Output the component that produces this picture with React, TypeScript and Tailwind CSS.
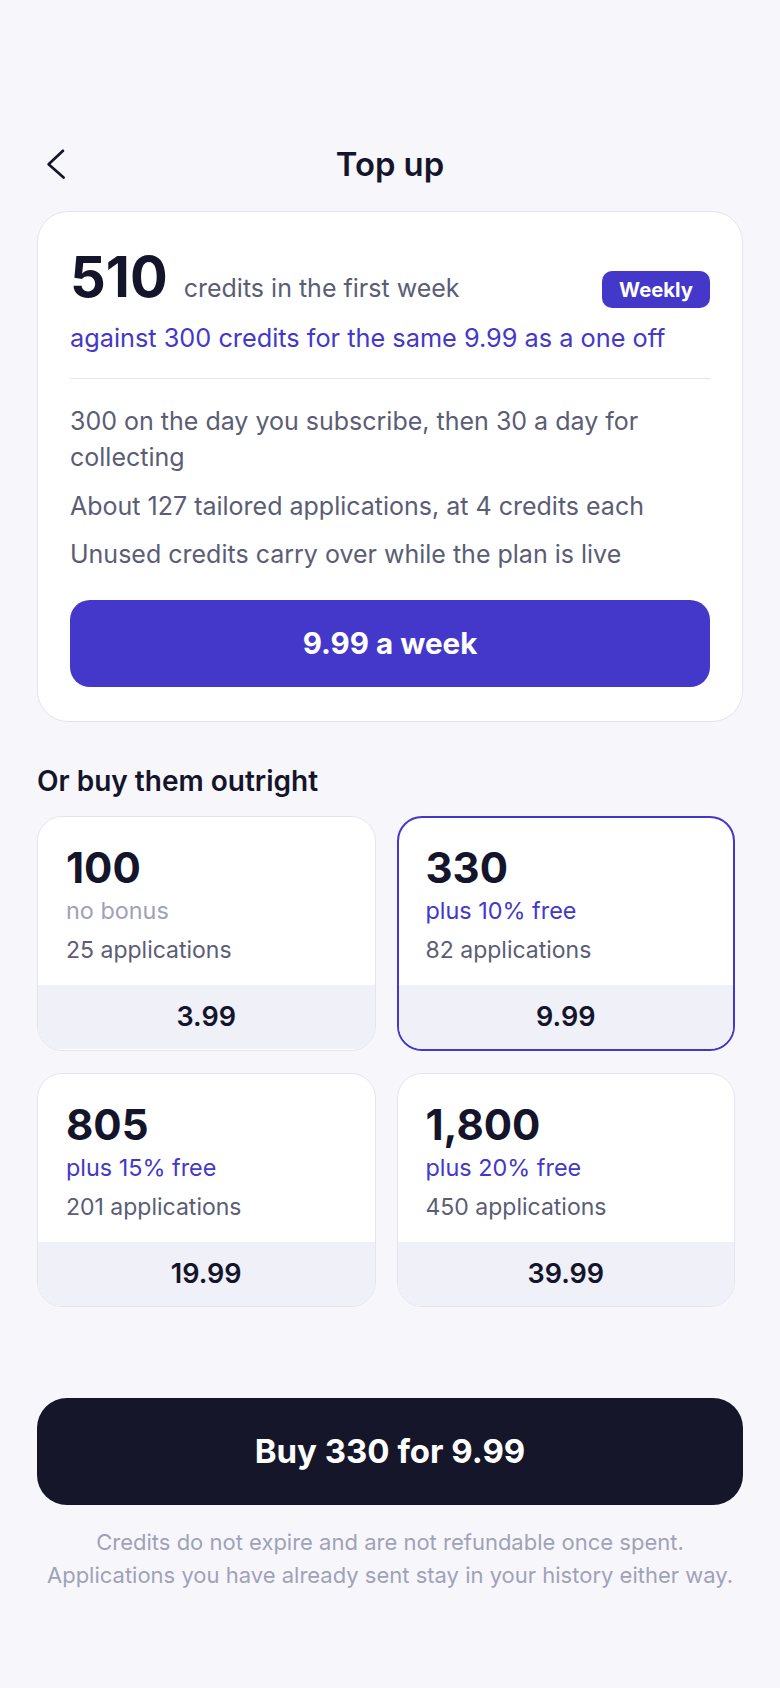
import React from "react";

// ─── Packs shown in the grid ────────────────────────────────────────────────
type Pack = { id: string; credits: string; bonus: string; apps: string; price: string };

const PACKS: Pack[] = [
  { id: "p100",  credits: "100",   bonus: "no bonus",      apps: "25 applications",  price: "3.99" },
  { id: "p330",  credits: "330",   bonus: "plus 10% free", apps: "82 applications",  price: "9.99" },
  { id: "p805",  credits: "805",   bonus: "plus 15% free", apps: "201 applications", price: "19.99" },
  { id: "p1800", credits: "1,800", bonus: "plus 20% free", apps: "450 applications", price: "39.99" },
];

const SELECTED = "p330";

function PackCard({ pack }: { pack: Pack }) {
  const selected = pack.id === SELECTED;
  const hasBonus = pack.bonus !== "no bonus";
  return (
    <button
      className={`flex flex-col overflow-hidden rounded-[25px] bg-white text-left ${
        selected ? "border-2 border-[#4338ca]" : "border border-[#e4e4ee]"
      }`}
    >
      <div className={`flex flex-col pb-[19px] ${selected ? "px-[27px] pt-[26px]" : "px-[28px] pt-[27px]"}`}>
        <span className="text-[42px] font-bold leading-[48px] text-[#14152b]">{pack.credits}</span>
        <span className={`mt-[3px] text-[23.4px] leading-[31px] ${hasBonus ? "text-[#4338ca]" : "text-[#9fa1b9]"}`}>
          {pack.bonus}
        </span>
        <span className="mt-[9px] text-[23px] leading-[31px] text-[#5a5d75]">{pack.apps}</span>
      </div>
      <div className="flex h-[64px] items-center justify-center bg-[#eff0f8] text-[27px] font-semibold text-[#14152b]">
        {pack.price}
      </div>
    </button>
  );
}

export default function App() {
  return (
    <div
      className="min-h-[1688px] bg-[#f7f7fb] px-[37px] pt-[136px] pb-[40px]"
      style={{ fontFamily: "Inter, 'Noto Sans', 'Liberation Sans', sans-serif" }}
    >
      {/* ── Header ── */}
      <header className="grid h-[56px] grid-cols-[1fr_auto_1fr] items-center">
        <button className="ml-[9px] flex h-[32px] w-[20px] items-center" aria-label="Back">
          <svg width="20" height="32" viewBox="0 0 20 32" fill="none" stroke="#14152b" strokeWidth={2.7} strokeLinecap="round" strokeLinejoin="round">
            <path d="M17 2.8L2.6 16.2 17.6 29.6" />
          </svg>
        </button>
        <h1 className="text-[32.8px] font-semibold leading-[40px] text-[#14152b]">Top up</h1>
        <div />
      </header>

      {/* ── Weekly plan ── */}
      <section className="mt-[19px] rounded-[31px] border border-[#e4e4ee] bg-white px-[32px] pt-[32px] pb-[34px]">
        <div className="flex items-baseline">
          <span className="text-[56px] font-bold leading-[67px] text-[#14152b]">510</span>
          <span className="ml-[16px] text-[25px] text-[#5a5d75]">credits in the first week</span>
          <span className="ml-auto rounded-[10px] bg-[#4338ca] px-[17px] py-[6px] text-[20.3px] font-bold leading-[25px] text-white">
            Weekly
          </span>
        </div>
        <p className="mt-[10px] text-[25.3px] leading-[34px] text-[#4338ca]">
          against 300 credits for the same 9.99 as a one off
        </p>
        <div className="mt-[23px] h-px bg-[#e4e4ee]" />
        <div className="mt-[24px] space-y-[12.5px] text-[25px] leading-[36px] text-[#5a5d75]">
          <p>300 on the day you subscribe, then 30 a day for collecting</p>
          <p>About 127 tailored applications, at 4 credits each</p>
          <p>Unused credits carry over while the plan is live</p>
        </div>
        <button className="mt-[28px] flex h-[87px] w-full items-center justify-center rounded-[20px] bg-[#4338ca] text-[29.6px] font-bold text-white">
          9.99 a week
        </button>
      </section>

      {/* ── One-off packs ── */}
      <h2 className="mt-[41px] text-[28px] font-semibold leading-[36px] text-[#14152b]">Or buy them outright</h2>
      <div className="mt-[17px] grid w-[698px] grid-cols-2 gap-x-[21px] gap-y-[22px]">
        {PACKS.map((p) => (
          <PackCard key={p.id} pack={p} />
        ))}
      </div>

      {/* ── Checkout ── */}
      <button className="mt-[91px] flex h-[107px] w-full items-center justify-center rounded-[30px] bg-[#151629] text-[33px] font-bold text-white">
        Buy 330 for 9.99
      </button>
      <p className="mt-[21px] text-center text-[22px] leading-[33px] text-[#9fa2b8]">
        Credits do not expire and are not refundable once spent.
        <br />
        Applications you have already sent stay in your history either way.
      </p>
    </div>
  );
}
